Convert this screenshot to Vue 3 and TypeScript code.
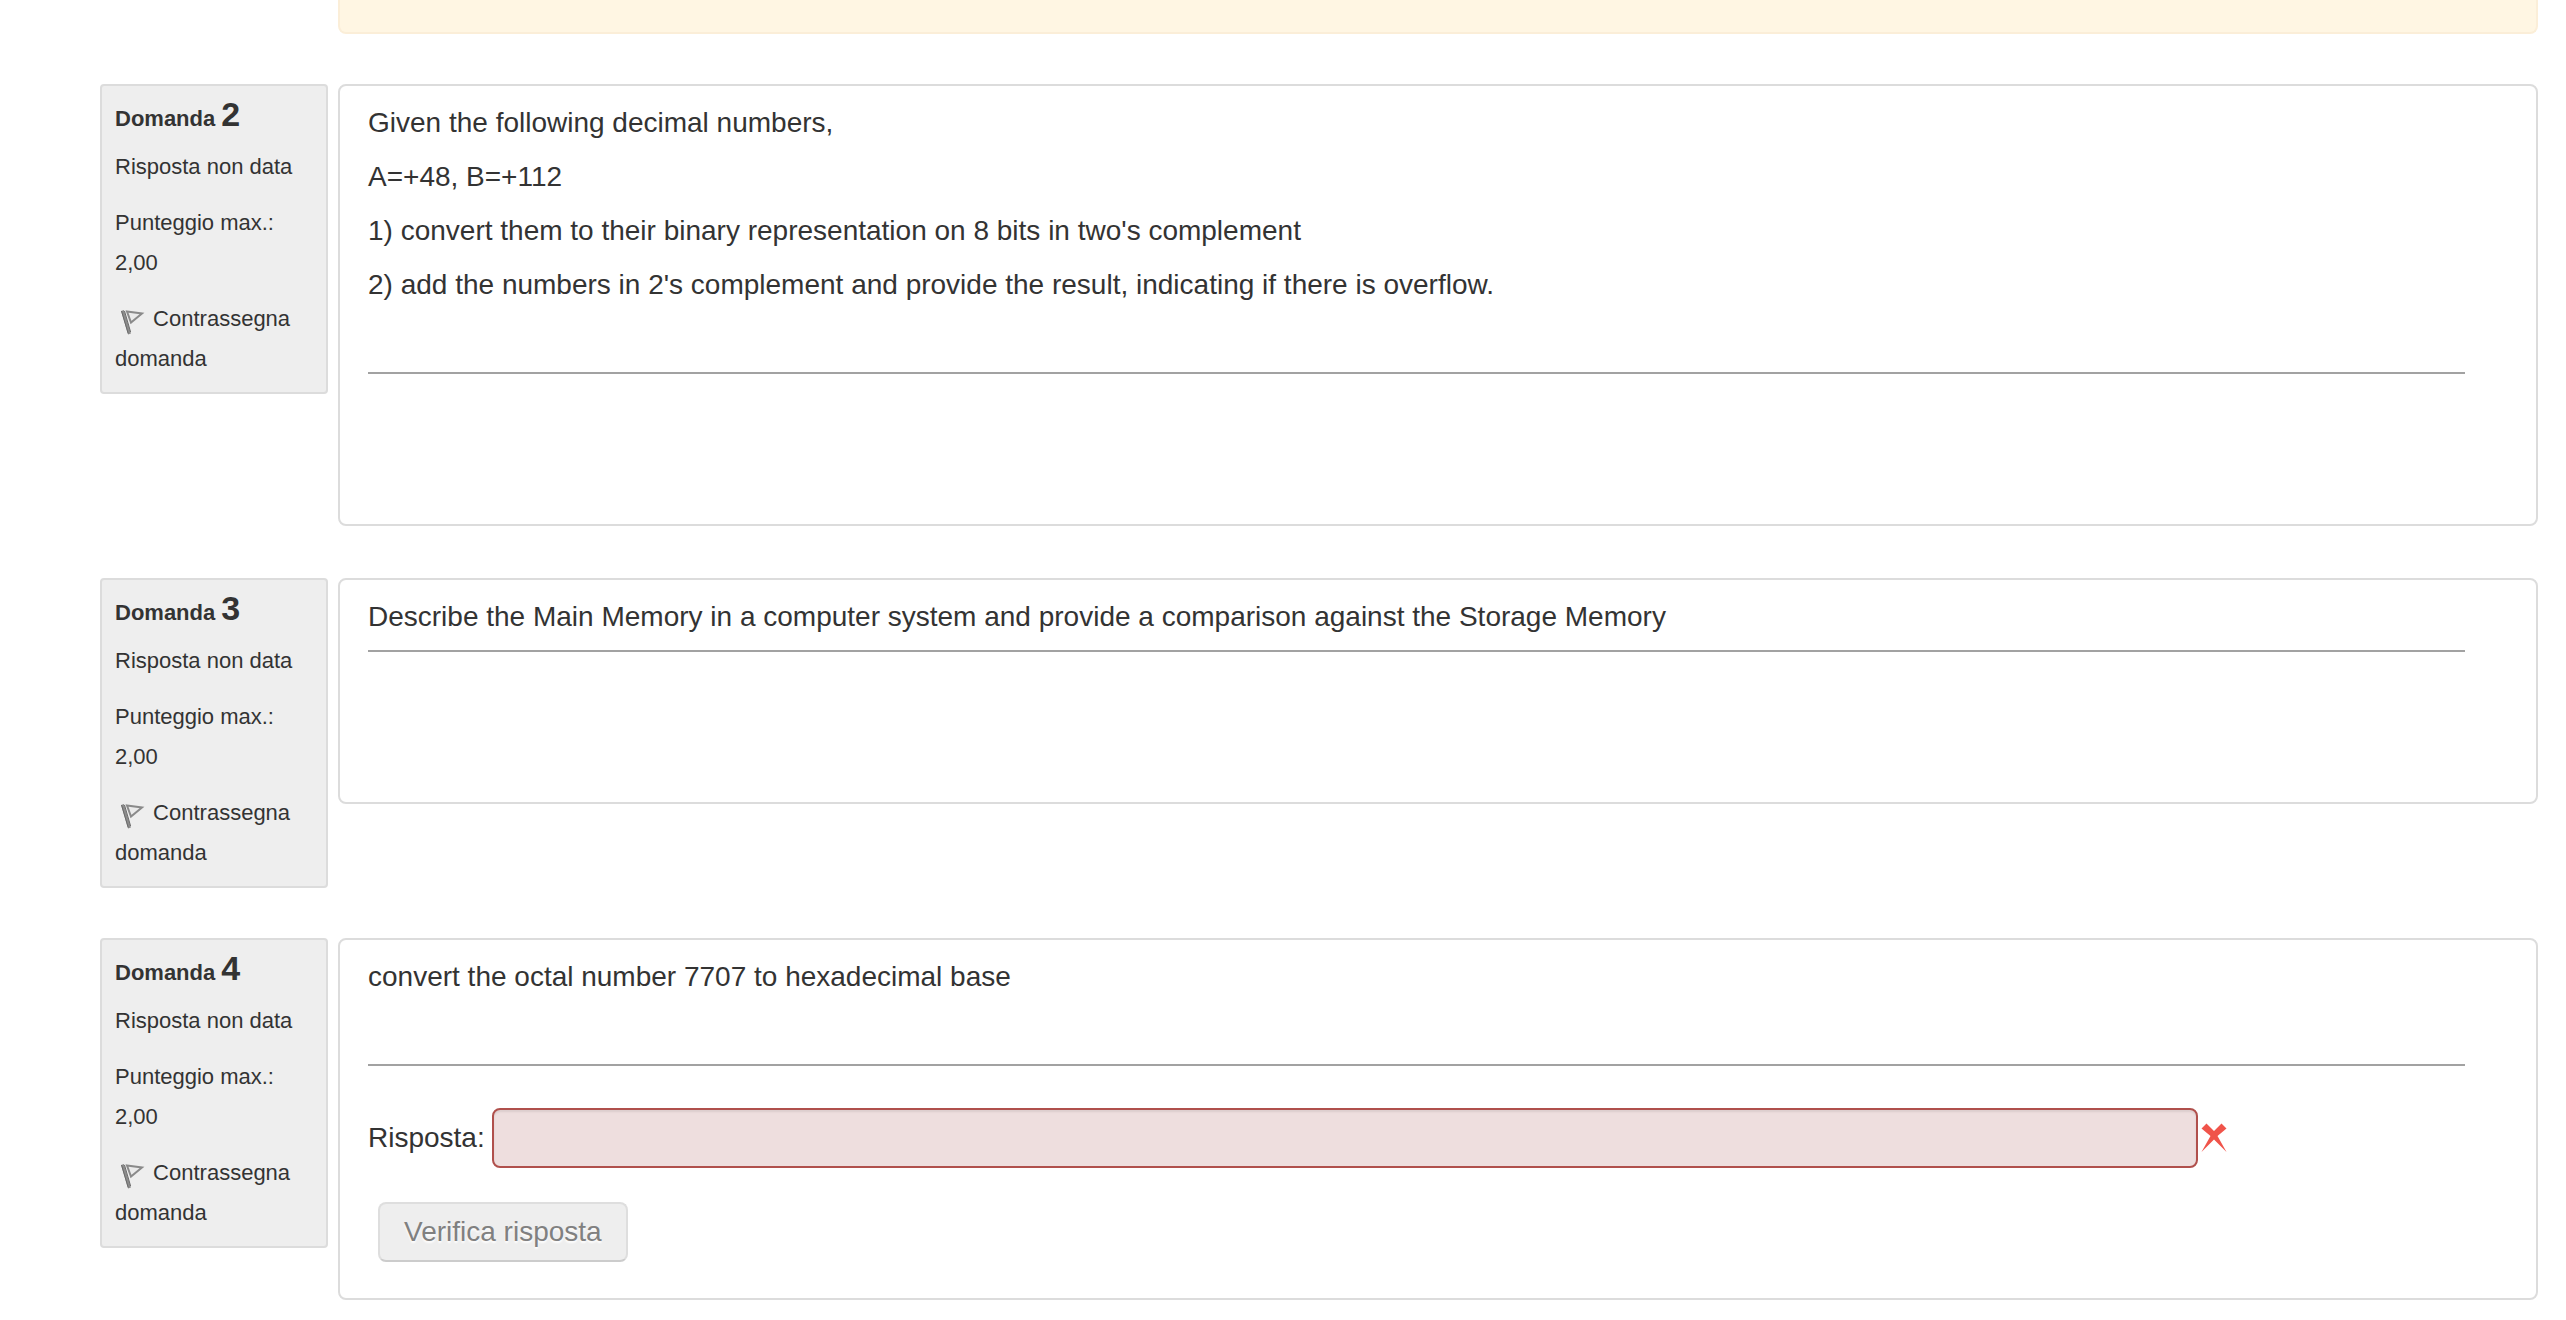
<script setup lang="ts">
interface Question {
  number: number
  paragraphs: string[]
  shortAnswer?: boolean
}

const questions: Question[] = [
  {
    number: 2,
    paragraphs: [
      'Given the following decimal numbers,',
      'A=+48, B=+112',
      "1) convert them to their binary representation on 8 bits in two's complement",
      "2) add the numbers in 2's complement and provide the result, indicating if there is overflow.",
      '',
    ],
  },
  {
    number: 3,
    paragraphs: [
      'Describe the Main Memory in a computer system and provide a comparison against the Storage Memory',
    ],
  },
  {
    number: 4,
    paragraphs: ['convert the octal number 7707 to hexadecimal base', ''],
    shortAnswer: true,
  },
]
</script>

<template>
  <main class="page">
    <div class="outcome"></div>
    <section v-for="q in questions" :key="q.number" class="question">
      <aside class="info">
        <h3 class="title">Domanda <span class="number">{{ q.number }}</span></h3>
        <p class="detail">Risposta non data</p>
        <p class="detail">Punteggio max.: 2,00</p>
        <a class="detail flag" href="#">
          <svg class="flag-icon" viewBox="0 0 32 32" aria-hidden="true">
            <defs>
              <filter :id="`soft-${q.number}`" x="-20%" y="-20%" width="140%" height="140%">
                <feGaussianBlur stdDeviation="0.6" />
              </filter>
            </defs>
            <g :filter="`url(#soft-${q.number})`">
              <path d="M12 7.5 L27 9.5 L16 18.5 Z" fill="#eaeaea" stroke="#8a8a8a" stroke-width="2" />
              <path d="M7.5 6.5 L14.5 30" fill="none" stroke="#8c8c8c" stroke-width="3" />
              <path d="M6.5 7 L13.2 29.5 M9.5 7 L15.6 28" fill="none" stroke="#6a6a6a" stroke-width="1" />
            </g>
          </svg>
          Contrassegna domanda
        </a>
      </aside>
      <div class="card">
        <p v-for="(text, i) in q.paragraphs" :key="i" class="text">{{ text }}</p>
        <hr class="rule" />
        <form v-if="q.shortAnswer" class="answer" @submit.prevent>
          <div class="field">
            <label :for="`answer-${q.number}`">Risposta:</label>
            <input :id="`answer-${q.number}`" class="input" type="text" readonly />
            <svg class="cross" viewBox="0 0 26 30" role="img" aria-label="Risposta errata">
              <path
                d="M0.5 5.5 L5.5 0.5 L13 8 L20.5 0.5 L25.5 5.5 L16.5 13 L25.5 29 L13 16.5 L0.5 29 L9.5 13 Z"
                fill="#f0544a"
              />
            </svg>
          </div>
          <button class="check" type="submit" disabled>Verifica risposta</button>
        </form>
        <div v-else class="blank"></div>
      </div>
    </section>
  </main>
</template>

<style>
body {
  margin: 0;
  background: #fff;
}
</style>

<style scoped>
.page {
  display: flex;
  flex-direction: column;
  gap: 50px;
  padding: 0 28px 18px 100px;
  color: #333;
  font-family: 'Liberation Sans', Arial, sans-serif;
  font-size: 28px;
  line-height: 42px;
}

.outcome {
  box-sizing: border-box;
  height: 34px;
  margin-left: 238px;
  border: 2px solid #fbeed8;
  border-top: 0;
  border-radius: 0 0 8px 8px;
  background: #fff6e3;
}

.question {
  display: flex;
  align-items: flex-start;
  gap: 10px;
}

.info {
  box-sizing: border-box;
  flex: none;
  width: 228px;
  padding: 13px;
  border: 2px solid #dcdcdc;
  border-radius: 4px;
  background: #eee;
  font-size: 22px;
  line-height: 40px;
}

.title {
  margin: 0 0 8px;
  font-size: 22px;
  font-weight: bold;
}

.number {
  font-size: 34px;
  line-height: 28px;
}

.detail {
  display: block;
  margin: 0 0 16px;
}

.flag {
  margin: 0;
  color: inherit;
  text-decoration: none;
}

.flag-icon {
  width: 32px;
  height: 32px;
  vertical-align: middle;
}

.card {
  flex: 1;
  min-width: 0;
  margin-bottom: 2px;
  padding: 16px 28px 36px;
  border: 2px solid #dcdcdc;
  border-radius: 8px;
  background: #fff;
}

.text {
  min-height: 42px;
  margin: 0 0 12px;
}

.rule {
  width: 98%;
  height: 2px;
  margin: 0;
  border: 0;
  background: #a2a2a2;
}

.blank {
  height: 114px;
}

.answer {
  padding-top: 42px;
}

.field {
  display: flex;
  align-items: center;
}

.input {
  box-sizing: border-box;
  width: calc(80% - 6px);
  height: 60px;
  margin: 0 3px 0 7px;
  padding: 8px 12px;
  border: 2px solid #b0504c;
  border-radius: 8px;
  outline: 0;
  background: #eedede;
  box-shadow: inset 0 2px 2px rgba(0, 0, 0, 0.08);
  color: inherit;
  font: inherit;
}

.cross {
  flex: none;
  width: 26px;
  height: 30px;
}

.check {
  display: block;
  box-sizing: border-box;
  height: 60px;
  margin: 34px 0 0 10px;
  padding: 0 24px;
  border: 2px solid #dedede;
  border-bottom-color: #ccc;
  border-radius: 8px;
  background: #eee;
  color: #808080;
  font: inherit;
  text-shadow: 0 2px 2px #fff;
}
</style>
